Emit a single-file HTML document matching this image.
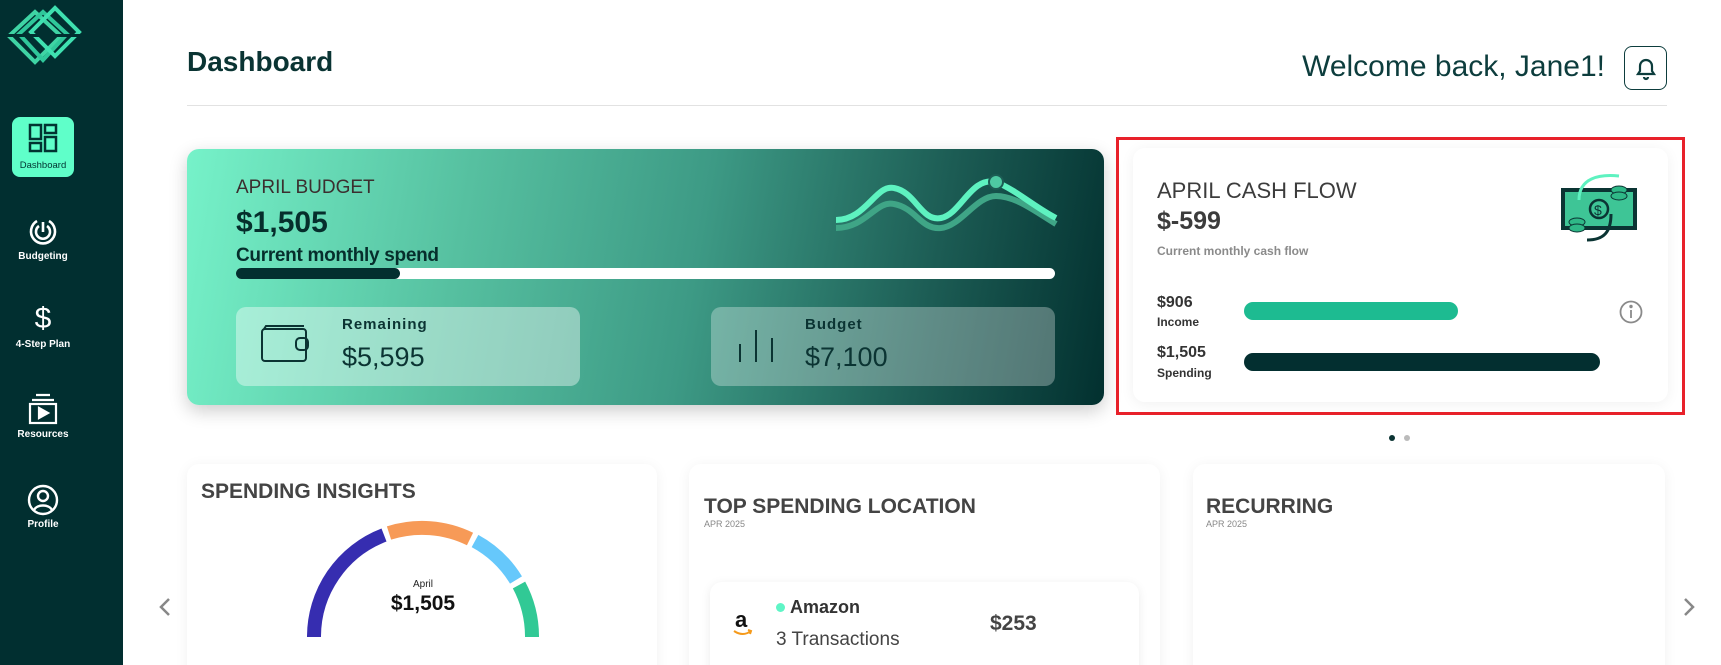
<!DOCTYPE html>
<html><head><meta charset="utf-8"><style>
*{margin:0;padding:0;box-sizing:border-box}
html,body{width:1721px;height:665px;overflow:hidden}
body{background:#fff;font-family:"Liberation Sans",sans-serif;position:relative;color:#0b3635}
.a{position:absolute}
.side{left:0;top:0;width:123px;height:665px;background:#012f30}
.nl{color:#fff;font-size:10px;font-weight:bold;width:86px;text-align:center;left:0}
.n{font-family:"Liberation Sans Narrow","Liberation Sans",sans-serif}
.card{background:#fff;border-radius:12px;box-shadow:0 2px 14px rgba(0,0,0,.06)}
</style></head><body>
<div class="a side"></div>
<svg class="a" style="left:5px;top:4px" width="78" height="62" viewBox="0 0 78 62">
<g fill="none" stroke-width="4">
<path d="M4 32 L30 8 L56 32 L30 58 Z" stroke="#3fd4a4"/><path d="M14 30 L38 8 L62 30 L38 56 Z" stroke="#2fc79a"/><path d="M26 28 L50 4 L74 28 L50 52 Z" stroke="#3fe0b0"/></g>
<rect x="0" y="30" width="78" height="3" fill="#012f30"/></svg>
<div class="a" style="left:12px;top:117px;width:62px;height:60px;background:#5fffc9;border-radius:8px"></div>
<svg class="a" style="left:28px;top:123px" width="30" height="30" viewBox="0 0 30 30" fill="none" stroke="#013331" stroke-width="2.5"><rect x="2" y="2" width="11" height="14"/><rect x="17" y="2" width="11" height="8"/><rect x="2" y="20" width="11" height="8"/><rect x="17" y="14" width="11" height="14"/></svg>
<div class="a" style="left:12px;top:160px;width:62px;text-align:center;font-size:9.5px;color:#013331">Dashboard</div>
<svg class="a" style="left:28px;top:216px" width="30" height="30" viewBox="0 0 30 30" fill="none" stroke="#fff" stroke-width="2.6"><path d="M9 5 A12 12 0 1 0 21 5"/><path d="M11 10 A7 7 0 1 0 19 10"/><path d="M15 6 V16"/></svg>
<div class="a nl" style="top:251px">Budgeting</div>
<div class="a" style="left:0;width:86px;top:302px;text-align:center;color:#fff;font-size:30px">$</div>
<div class="a nl" style="top:339px">4-Step Plan</div>
<svg class="a" style="left:27px;top:393px" width="32" height="32" viewBox="0 0 32 32" fill="none" stroke="#fff" stroke-width="2.2"><path d="M9 2H23M5 7H27"/><rect x="3" y="11" width="26" height="19"/><path d="M12 15 L21 20 L12 25Z" fill="#fff"/></svg>
<div class="a nl" style="top:429px">Resources</div>
<svg class="a" style="left:27px;top:484px" width="32" height="32" viewBox="0 0 32 32" fill="none" stroke="#fff" stroke-width="2.4"><circle cx="16" cy="16" r="14"/><circle cx="16" cy="12" r="5"/><path d="M7 26 C10 20 22 20 25 26"/></svg>
<div class="a nl" style="top:519px">Profile</div>

<div class="a" style="left:187px;top:46px;font-size:28px;font-weight:bold;color:#0a3433">Dashboard</div>
<div class="a" style="left:187px;top:105px;width:1480px;height:1px;background:#e2e2e2"></div>
<div class="a" style="left:1300px;top:50px;width:305px;text-align:right;font-size:30px;color:#0d3d3d">Welcome back, Jane1!</div>
<div class="a" style="left:1624px;top:46px;width:43px;height:44px;border:1.5px solid #0d3d3d;border-radius:8px"></div>
<svg class="a" style="left:1633px;top:55px" width="26" height="26" viewBox="0 0 26 26" fill="none" stroke="#0d3d3d" stroke-width="2.2"><path d="M5 19 H21 L19 16 V11 A6 6 0 0 0 7 11 V16 Z"/><path d="M11 22 A2 2 0 0 0 15 22"/></svg>

<div class="a" style="left:187px;top:149px;width:917px;height:256px;border-radius:12px;background:linear-gradient(100deg,#76f2c9 0%,#56c0a0 30%,#3d9a85 55%,#1c5c54 80%,#02302f 100%);box-shadow:0 6px 18px rgba(0,0,0,.2)"></div>
<div class="a n" style="left:236px;top:177px;font-size:19px;color:#3b2f2f">APRIL BUDGET</div>
<div class="a" style="left:236px;top:206px;font-size:30px;font-weight:bold;color:#062e2c">$1,505</div>
<div class="a" style="left:236px;top:245px;font-size:19px;color:#062e2c;font-weight:bold;letter-spacing:-0.3px">Current monthly spend</div>
<div class="a" style="left:236px;top:268px;width:819px;height:11px;background:#fff;border-radius:6px"></div>
<div class="a" style="left:236px;top:268px;width:164px;height:11px;background:#032f2f;border-radius:6px"></div>
<svg class="a" style="left:836px;top:170px" width="222" height="66" viewBox="0 0 222 66"><path d="M0 58 C30 58 40 30 58 34 C80 38 85 60 105 58 C125 56 140 26 160 26 C180 26 200 42 220 54" fill="none" stroke="#3fa586" stroke-width="6"/><path d="M0 50 C30 50 40 14 58 18 C80 22 85 52 105 48 C125 44 135 6 160 12 C180 20 200 38 220 48" fill="none" stroke="#5ef2c0" stroke-width="6"/><circle cx="160" cy="12" r="7" fill="#4ec9a3" stroke="#1c5c54" stroke-width="2"/></svg>
<div class="a" style="left:236px;top:307px;width:344px;height:79px;border-radius:10px;background:rgba(255,255,255,.4)"></div>
<div class="a" style="left:711px;top:307px;width:344px;height:79px;border-radius:10px;background:rgba(255,255,255,.3)"></div>
<svg class="a" style="left:260px;top:325px" width="52" height="38" viewBox="0 0 52 38" fill="none" stroke="#0b3433" stroke-width="2"><rect x="2" y="4" width="44" height="32" rx="3"/><path d="M4 4 L6 1 H44"/><rect x="36" y="13" width="12" height="12" rx="4"/></svg>
<svg class="a" style="left:738px;top:328px" width="36" height="36" viewBox="0 0 36 36" stroke="#0b3433" stroke-width="2"><path d="M2 16V34M18 2V34M34 10V34"/></svg>
<div class="a" style="left:342px;top:316px;font-size:15px;font-weight:bold;letter-spacing:1px;color:#0b3433">Remaining</div>
<div class="a n" style="left:342px;top:342px;font-size:27px;color:#0b3433">$5,595</div>
<div class="a" style="left:805px;top:316px;font-size:15px;font-weight:bold;letter-spacing:1px;color:#0b3433">Budget</div>
<div class="a n" style="left:805px;top:342px;font-size:27px;color:#0b3433">$7,100</div>

<div class="a" style="left:1116px;top:137px;width:569px;height:278px;border:3px solid #e8212a"></div>
<div class="a card" style="left:1133px;top:148px;width:535px;height:254px"></div>
<div class="a n" style="left:1157px;top:178px;font-size:22px;color:#3c3c3c">APRIL CASH FLOW</div>
<div class="a" style="left:1157px;top:207px;font-size:25px;font-weight:bold;color:#3c3c3c">$-599</div>
<div class="a" style="left:1157px;top:244px;font-size:12px;color:#8a8a8a;font-weight:bold">Current monthly cash flow</div>
<svg class="a" style="left:1559px;top:172px" width="86" height="76" viewBox="0 0 86 76"><rect x="4" y="18" width="72" height="38" fill="#3ec596" stroke="#0b3433" stroke-width="4"/><circle cx="40" cy="37" r="9" fill="none" stroke="#0b3433" stroke-width="2.5"/><text x="35" y="43" font-size="14" fill="#0b3433" font-family="Liberation Sans">$</text><ellipse cx="60" cy="18" rx="8" ry="4" fill="#2fb887" stroke="#0b3433"/><ellipse cx="60" cy="24" rx="8" ry="4" fill="#2fb887" stroke="#0b3433"/><ellipse cx="18" cy="50" rx="8" ry="4" fill="#2fb887" stroke="#0b3433"/><ellipse cx="18" cy="56" rx="8" ry="4" fill="#2fb887" stroke="#0b3433"/><path d="M60 4 C40 2 20 6 20 28" fill="none" stroke="#5ef2c0" stroke-width="3"/><path d="M28 68 C45 68 52 60 52 42" fill="none" stroke="#0b3433" stroke-width="3"/></svg>
<div class="a" style="left:1157px;top:294px;font-size:16px;font-weight:bold;color:#333">$906</div>
<div class="a" style="left:1157px;top:315px;font-size:12px;font-weight:bold;color:#333">Income</div>
<div class="a" style="left:1157px;top:344px;font-size:16px;font-weight:bold;color:#333">$1,505</div>
<div class="a" style="left:1157px;top:366px;font-size:12px;font-weight:bold;color:#333">Spending</div>
<div class="a" style="left:1244px;top:302px;width:214px;height:18px;border-radius:9px;background:#1dbb91"></div>
<div class="a" style="left:1244px;top:353px;width:356px;height:18px;border-radius:9px;background:#032f30"></div>
<svg class="a" style="left:1619px;top:300px" width="24" height="24" viewBox="0 0 24 24" fill="none" stroke="#8a8a8a" stroke-width="1.8"><circle cx="12" cy="12" r="10.5"/><path d="M12 10V18"/><circle cx="12" cy="6.5" r="0.8" fill="#8a8a8a"/></svg>
<div class="a" style="left:1389px;top:435px;width:6px;height:6px;border-radius:3px;background:#0b3433"></div>
<div class="a" style="left:1404px;top:435px;width:6px;height:6px;border-radius:3px;background:#bbb"></div>

<div class="a card" style="left:187px;top:464px;width:470px;height:230px"></div>
<div class="a card" style="left:689px;top:464px;width:471px;height:230px"></div>
<div class="a card" style="left:1193px;top:464px;width:472px;height:230px"></div>
<div class="a n" style="left:201px;top:480px;font-size:21px;font-weight:bold;color:#444">SPENDING INSIGHTS</div>
<svg class="a" style="left:300px;top:512px" width="250" height="130" viewBox="300 512 250 130" fill="none" stroke-width="14">
<path d="M314 637 A109 109 0 0 1 384 535" stroke="#362db0"/>
<path d="M389 533 A109 109 0 0 1 470 539" stroke="#f79a57"/>
<path d="M475 541 A109 109 0 0 1 516 580" stroke="#66c8fb"/>
<path d="M519 585 A109 109 0 0 1 532 637" stroke="#31c995"/>
</svg>
<div class="a" style="left:373px;top:579px;width:100px;text-align:center;font-size:10px;color:#222">April</div>
<div class="a" style="left:353px;top:592px;width:140px;text-align:center;font-size:21px;font-weight:bold;color:#111">$1,505</div>
<div class="a n" style="left:704px;top:495px;font-size:21px;font-weight:bold;color:#444">TOP SPENDING LOCATION</div>
<div class="a" style="left:704px;top:519px;font-size:9px;color:#888">APR 2025</div>
<div class="a n" style="left:1206px;top:495px;font-size:21px;font-weight:bold;color:#444">RECURRING</div>
<div class="a" style="left:1206px;top:519px;font-size:9px;color:#888">APR 2025</div>
<div class="a card" style="left:710px;top:582px;width:429px;height:100px;box-shadow:0 2px 10px rgba(0,0,0,.08)"></div>
<div class="a" style="left:735px;top:607px;font-size:22px;font-weight:bold;color:#111">a</div>
<svg class="a" style="left:733px;top:629px" width="20" height="8" viewBox="0 0 20 8"><path d="M1 2 Q10 8 18 2 M15 1 L18 2 L17 5" fill="none" stroke="#f59a1b" stroke-width="2"/></svg>
<div class="a" style="left:776px;top:603px;width:9px;height:9px;border-radius:5px;background:#5ff5c6"></div>
<div class="a n" style="left:790px;top:597px;font-size:18px;font-weight:bold;color:#333">Amazon</div>
<div class="a n" style="left:776px;top:629px;font-size:19px;color:#444">3 Transactions</div>
<div class="a n" style="left:990px;top:612px;font-size:21px;font-weight:bold;color:#444">$253</div>
<svg class="a" style="left:158px;top:597px" width="14" height="20" viewBox="0 0 14 20"><path d="M11 2 L3 10 L11 18" fill="none" stroke="#888" stroke-width="2.5"/></svg>
<svg class="a" style="left:1682px;top:597px" width="14" height="20" viewBox="0 0 14 20"><path d="M3 2 L11 10 L3 18" fill="none" stroke="#888" stroke-width="2.5"/></svg>
</body></html>
